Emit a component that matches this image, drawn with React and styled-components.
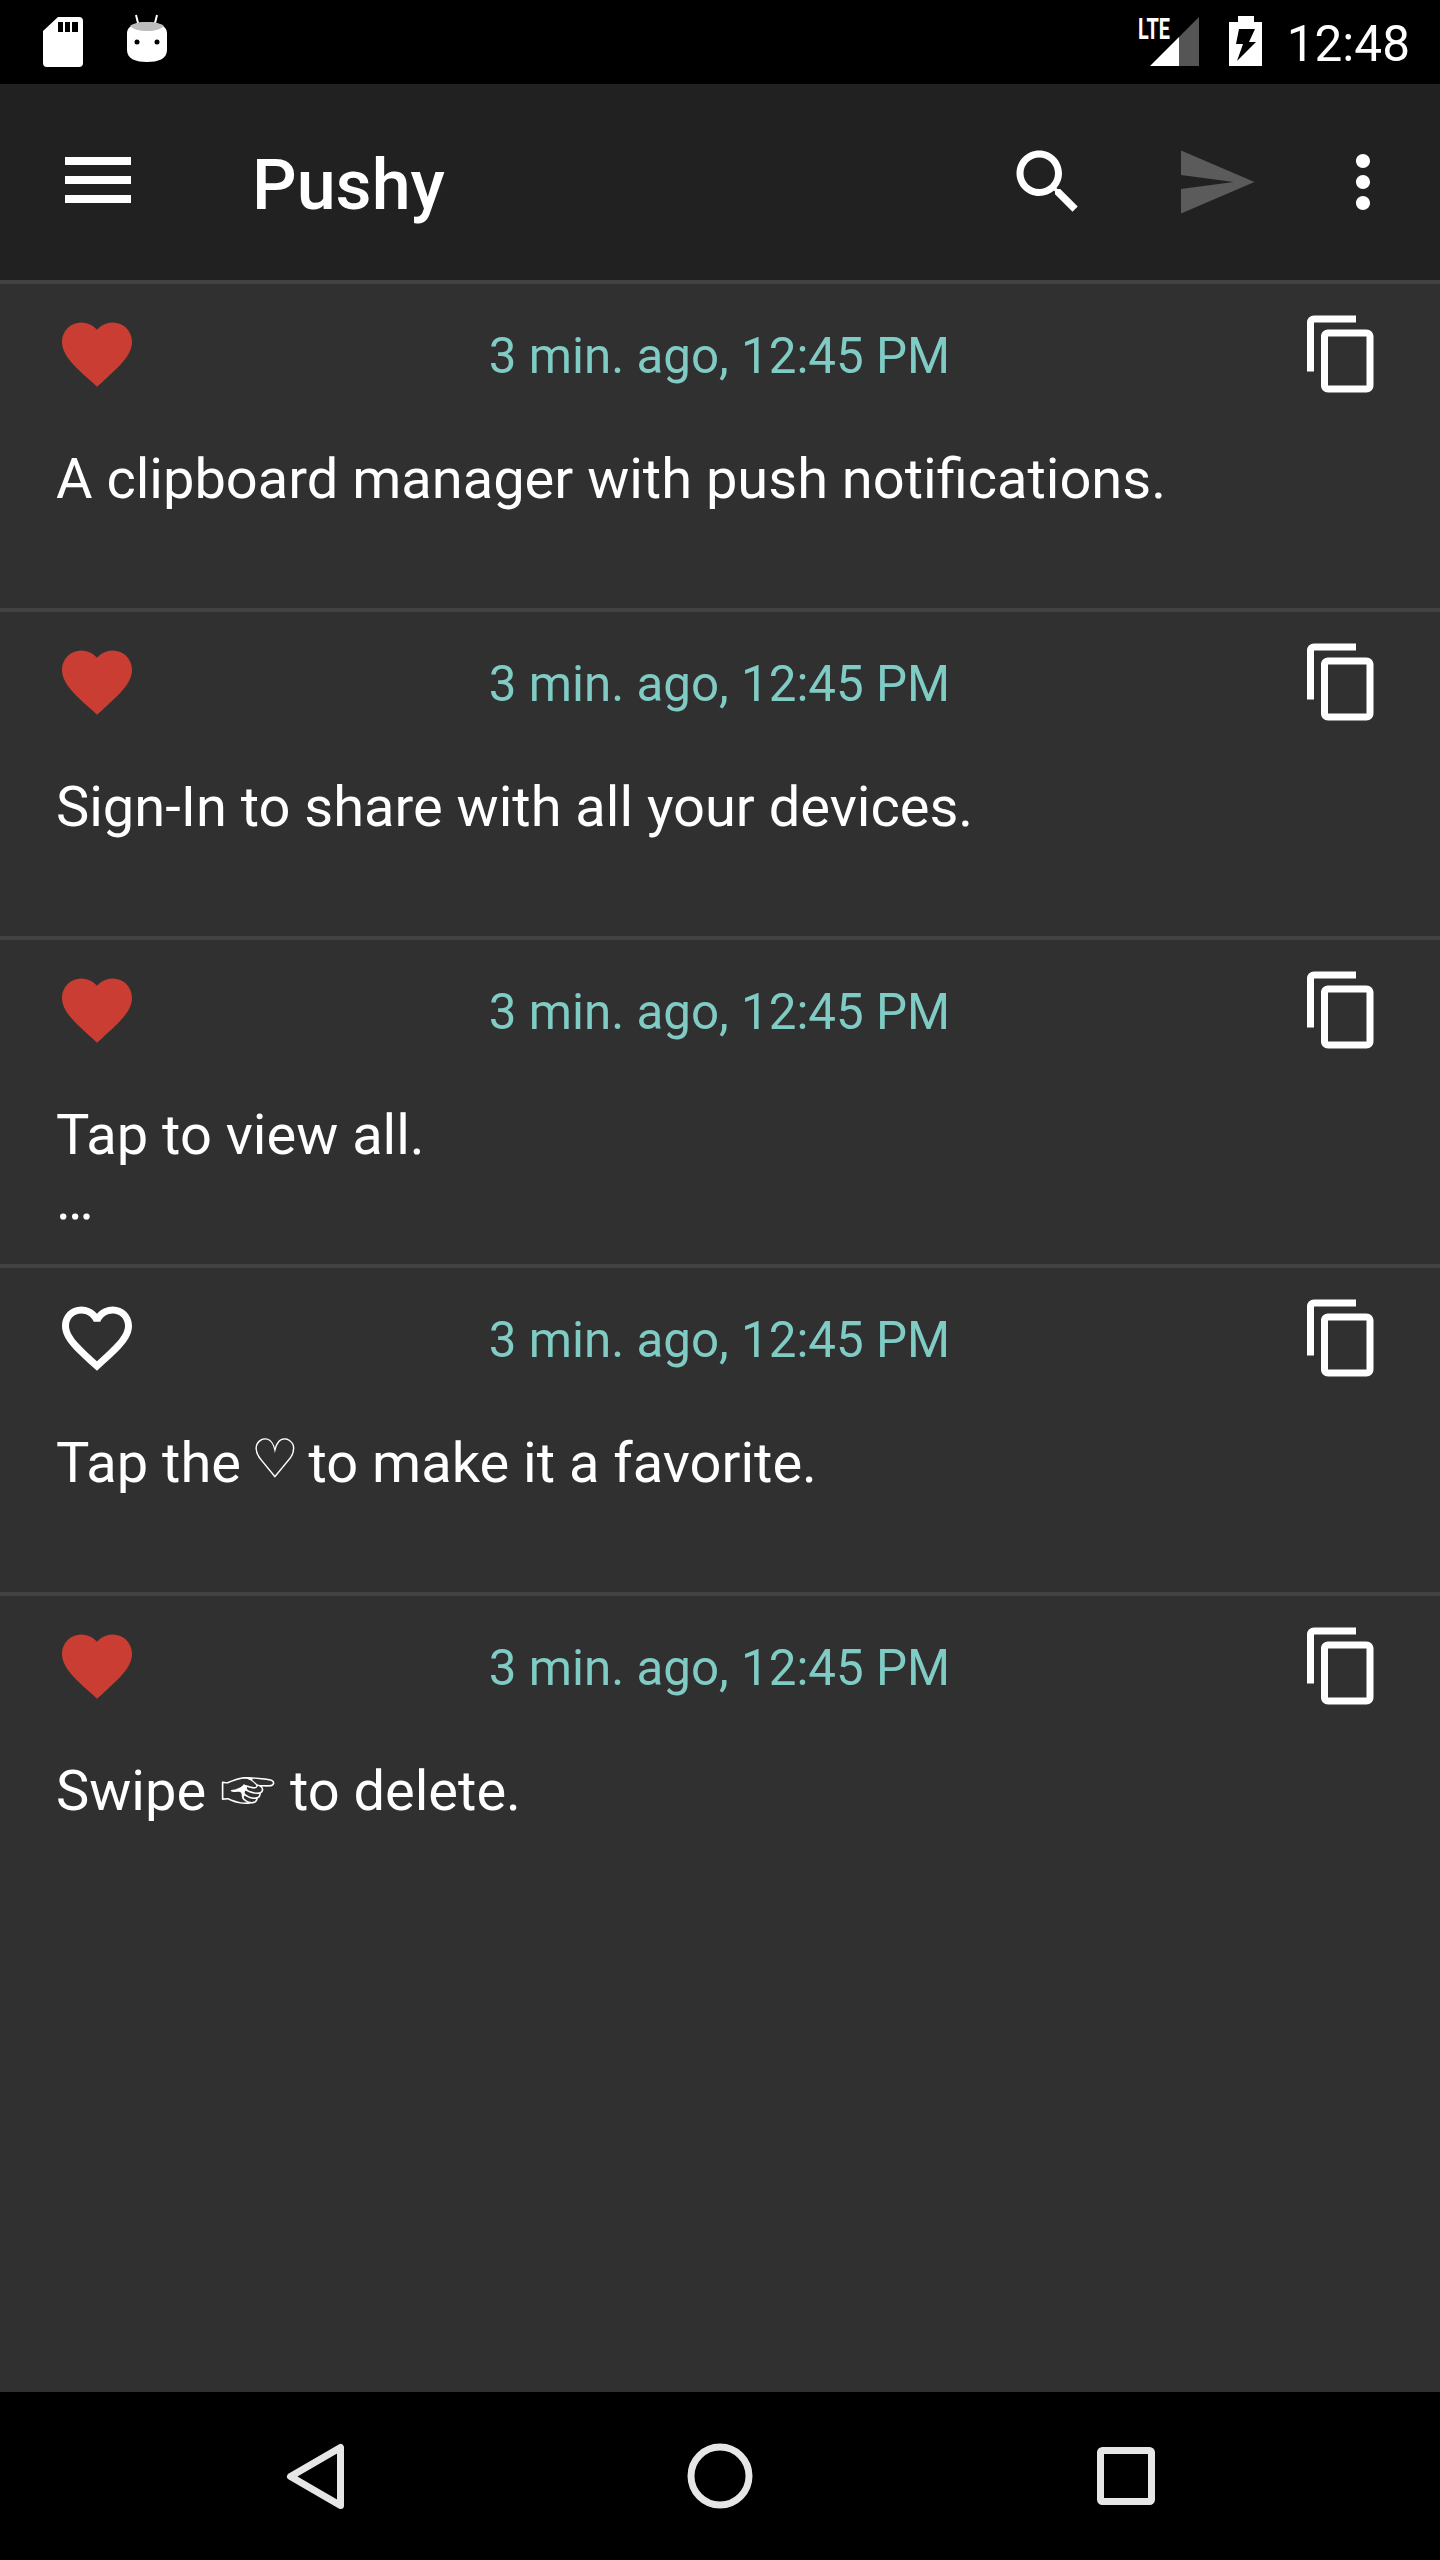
import React from "react";
import styled, { createGlobalStyle } from "styled-components";

const GlobalStyle = createGlobalStyle`
  html, body {
    margin: 0;
    padding: 0;
    background: #303030;
  }
  * {
    box-sizing: border-box;
  }
`;

const Page = styled.div`
  width: 1440px;
  height: 2560px;
  display: flex;
  flex-direction: column;
  overflow: hidden;
  font-family: Roboto, "DejaVu Sans", sans-serif;
  color: #fff;
`;

const StatusBar = styled.div`
  height: 84px;
  flex: none;
  background: #000;
  display: flex;
  align-items: center;
  justify-content: space-between;
  padding: 0 30px 0 43px;
`;

const StatusGroup = styled.div`
  display: flex;
  align-items: center;
`;

const StatusIcon = styled.svg`
  display: block;
  height: 84px;
  flex: none;
  margin-left: ${(p) => p.$gap || 0}px;
`;

const Clock = styled.span`
  font-size: 49.5px;
  line-height: 84px;
  margin-left: 25px;
  padding-top: 3px;
`;

const Toolbar = styled.header`
  height: 196px;
  flex: none;
  background: #212121;
  display: flex;
  align-items: center;
  padding: 0 35px 0 54px;
`;

const MenuButton = styled.svg`
  display: block;
  width: 88px;
  height: 84px;
  flex: none;
  margin-top: -4px;
`;

const Title = styled.h1`
  margin: 0 0 0 110px;
  padding-top: 6px;
  flex: 1;
  font-size: 70px;
  font-weight: 500;
  line-height: 84px;
`;

const ActionIcon = styled.svg`
  display: block;
  width: 84px;
  height: 84px;
  flex: none;
  fill: ${(p) => p.$color || "#fff"};
  margin-left: ${(p) => p.$gap || 0}px;
`;

const List = styled.main`
  flex: 1;
  background: #303030;
`;

const Row = styled.article`
  height: 328px;
  border-top: 4px solid #424242;
  padding: 28px 56px 0 55px;
`;

const RowHeader = styled.div`
  display: flex;
  align-items: center;
  justify-content: space-between;
  height: 84px;
`;

const RowIcon = styled.svg`
  display: block;
  width: 84px;
  height: 84px;
  flex: none;
  fill: ${(p) => p.$color || "#fff"};
`;

const Stamp = styled.span`
  font-size: 49.3px;
  line-height: 57px;
  color: #80cbc4;
  padding-top: 4px;
`;

const Message = styled.p`
  margin: 51px 0 0 1px;
  font-size: 56px;
  line-height: 65px;
  white-space: pre-line;
`;

const Symbol = styled.span`
  font-family: ${(p) => p.$font};
  font-size: ${(p) => p.$size}px;
  line-height: 0;
`;

const NavBar = styled.nav`
  height: 168px;
  flex: none;
  background: #000;
  display: flex;
  align-items: center;
  justify-content: center;
  gap: 320px;
`;

const NavIcon = styled.svg`
  display: block;
  width: 84px;
  height: 84px;
  fill: none;
  stroke: #e6e6e6;
  stroke-width: 7;
  stroke-linejoin: round;
`;

const HEART =
  "M12 21.35l-1.45-1.32C5.4 15.36 2 12.28 2 8.5 2 5.42 4.42 3 7.5 3c1.74 0 3.41.81 4.5 2.09C13.09 3.81 14.76 3 16.5 3 19.58 3 22 5.42 22 8.5c0 3.78-3.4 6.86-8.55 11.54L12 21.35z";
const HEART_OUTLINE =
  "M16.5 3c-1.74 0-3.41.81-4.5 2.09C10.91 3.81 9.24 3 7.5 3 4.42 3 2 5.42 2 8.5c0 3.78 3.4 6.86 8.55 11.54L12 21.35l1.45-1.32C18.6 15.36 22 12.28 22 8.5 22 5.42 19.58 3 16.5 3zm-4.4 15.55l-.1.1-.1-.1C7.14 14.24 4 11.39 4 8.5 4 6.5 5.5 5 7.5 5c1.54 0 3.04.99 3.57 2.36h1.87C13.46 5.99 14.96 5 16.5 5c2 0 3.5 1.5 3.5 3.5 0 2.89-3.14 5.74-7.9 10.05z";
const COPY =
  "M16 1H4c-1.1 0-2 .9-2 2v14h2V3h12V1zm3 4H8c-1.1 0-2 .9-2 2v14c0 1.1.9 2 2 2h11c1.1 0 2-.9 2-2V7c0-1.1-.9-2-2-2zm0 16H8V7h11v14z";

const HeartGlyph = () => (
  <Symbol $font={'"DejaVu Sans Mono", monospace'} $size={66}>
    ♡
  </Symbol>
);

const HandGlyph = () => (
  <Symbol $font={'"Noto Sans CJK JP", sans-serif'} $size={56}>
    ☞
  </Symbol>
);

const messages = [
  { id: 1, text: "A clipboard manager with push notifications.", favorite: true },
  { id: 2, text: "Sign-In to share with all your devices.", favorite: true },
  { id: 3, text: "Tap to view all.\n…", favorite: true },
  {
    id: 4,
    text: (
      <>
        Tap the <HeartGlyph /> to make it a favorite.
      </>
    ),
    favorite: false,
  },
  {
    id: 5,
    text: (
      <>
        Swipe <HandGlyph /> to delete.
      </>
    ),
    favorite: true,
  },
];

const SdCardIcon = () => (
  <StatusIcon viewBox="43 0 40 84" width="40">
    <path
      fill="#fff"
      fillRule="evenodd"
      d="M58 17h21a4 4 0 0 1 4 4v42a4 4 0 0 1-4 4H47a4 4 0 0 1-4-4V31zM58 22v10h5V22zM65 22v10h5V22zM72 22v10h6V22z"
    />
  </StatusIcon>
);

const AndroidIcon = () => (
  <StatusIcon viewBox="127 0 40 84" width="40" $gap={44}>
    <path d="M136 15l2.5 10M157 15l-2.5 10" stroke="#fff" strokeWidth="2" />
    <path
      fill="#fff"
      d="M127 33c0-7 9-11 20-11s20 4 20 11v17c0 9-9 12-20 12s-20-3-20-12z"
    />
    <path fill="#bdbdbd" d="M130 26c3-2.500 9-4 17-4s14 1.500 17 4c-3 3-9 5-17 5s-14-2-17-5z" />
    <circle cx="137" cy="42" r="2.500" fill="#000" />
    <circle cx="157" cy="42" r="2.500" fill="#000" />
  </StatusIcon>
);

const SignalIcon = () => (
  <StatusIcon viewBox="1138 0 61 84" width="61">
    <path fill="#555" d="M1179 37l20-20v49h-20z" />
    <path fill="#fff" d="M1150 66l29-29v29z" />
    <text
      x="1138"
      y="39"
      fill="#fff"
      fontFamily="Roboto, sans-serif"
      fontWeight="700"
      fontSize="29"
      textLength="32"
      lengthAdjust="spacingAndGlyphs"
    >
      LTE
    </text>
  </StatusIcon>
);

const BatteryIcon = () => (
  <StatusIcon viewBox="1229 0 33 84" width="33" $gap={30}>
    <path
      fill="#fff"
      fillRule="evenodd"
      d="M1238 16h16v6h8v44h-33V22h9zM1239 29h16l-6 13h7l-19 19 6-17h-7z"
    />
  </StatusIcon>
);

export default function App() {
  return (
    <Page>
      <GlobalStyle />
      <StatusBar>
        <StatusGroup>
          <SdCardIcon />
          <AndroidIcon />
        </StatusGroup>
        <StatusGroup>
          <SignalIcon />
          <BatteryIcon />
          <Clock>12:48</Clock>
        </StatusGroup>
      </StatusBar>

      <Toolbar>
        <MenuButton viewBox="0 0 88 84" fill="#fff">
          <rect x="11" y="19" width="66" height="8" />
          <rect x="11" y="38" width="66" height="8" />
          <rect x="11" y="57" width="66" height="8" />
        </MenuButton>
        <Title>Pushy</Title>
        <ActionIcon viewBox="0 0 24 24">
          <path d="M15.5 14h-.79l-.28-.27C15.41 12.59 16 11.11 16 9.5 16 5.91 13.09 3 9.5 3S3 5.91 3 9.5 5.91 16 9.5 16c1.61 0 3.09-.59 4.23-1.57l.27.28v.79l5 4.99L20.49 19l-4.99-5zm-6 0C7.01 14 5 11.99 5 9.5S7.01 5 9.5 5 14 7.01 14 9.5 11.99 14 9.5 14z" />
        </ActionIcon>
        <ActionIcon viewBox="0 0 24 24" $color="#5b5b5b" $gap={84}>
          <path d="M2.010 21L23 12 2.010 3 2 10l15 2-15 2z" />
        </ActionIcon>
        <ActionIcon viewBox="0 0 24 24" $gap={63}>
          <path d="M12 8c1.100 0 2-.9 2-2s-.9-2-2-2-2 .9-2 2 .9 2 2 2zm0 2c-1.100 0-2 .9-2 2s.9 2 2 2 2-.9 2-2-.9-2-2-2zm0 6c-1.100 0-2 .9-2 2s.9 2 2 2 2-.9 2-2-.9-2-2-2z" />
        </ActionIcon>
      </Toolbar>

      <List>
        {messages.map((m) => (
          <Row key={m.id}>
            <RowHeader>
              <RowIcon viewBox="0 0 24 24" $color={m.favorite ? "#c93d33" : "#fff"}>
                <path d={m.favorite ? HEART : HEART_OUTLINE} />
              </RowIcon>
              <Stamp>3 min. ago, 12:45 PM</Stamp>
              <RowIcon viewBox="0 0 24 24">
                <path d={COPY} />
              </RowIcon>
            </RowHeader>
            <Message>{m.text}</Message>
          </Row>
        ))}
      </List>

      <NavBar>
        <NavIcon viewBox="0 0 84 84">
          <path d="M66.5 13.5v58L16.500 42.500z" />
        </NavIcon>
        <NavIcon viewBox="0 0 84 84">
          <circle cx="42" cy="42" r="29" />
        </NavIcon>
        <NavIcon viewBox="0 0 84 84">
          <rect x="18.500" y="16.500" width="51" height="51" rx="2" />
        </NavIcon>
      </NavBar>
    </Page>
  );
}
